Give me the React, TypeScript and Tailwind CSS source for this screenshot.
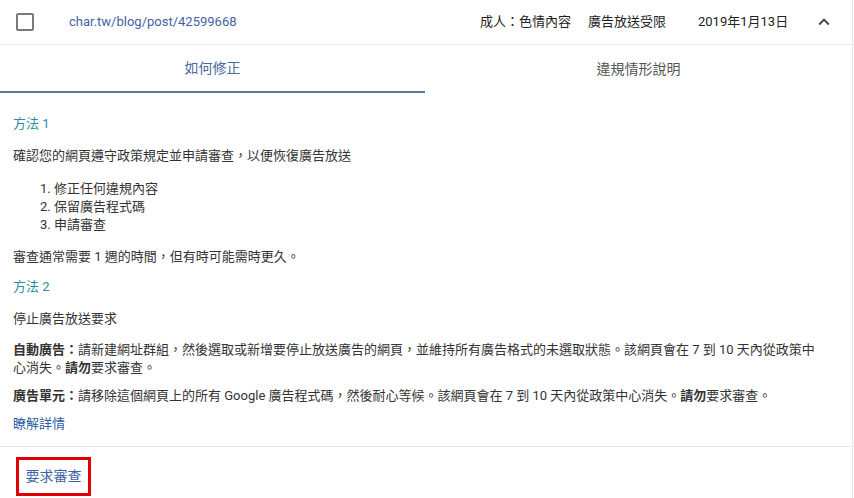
import React from "react";

const font = { fontFamily: 'Roboto, "Noto Sans CJK TC", sans-serif' };

export default function App() {
  return (
    <div
      className="w-[854px] h-[498px] bg-white text-[13px] text-[#333] overflow-hidden"
      style={font}
    >
      <div className="w-[853px] h-full border-r border-[#e6e6e6] flex flex-col">
        {/* header row */}
        <div className="h-[45px] flex items-center border-b border-[#e8e8e8] shrink-0">
          <div className="w-[18px] h-[18px] ml-4 border-2 border-[#7a7a7a] rounded-[2px]" />
          <a className="ml-[35px] text-[#3f63a8] text-[13px]">char.tw/blog/post/42599668</a>
          <div className="flex-1" />
          <span className="text-[#222] w-[108px]">成人：色情內容</span>
          <span className="text-[#222] w-[110px]">廣告放送受限</span>
          <span className="text-[#222] w-[100px]">2019年1月13日</span>
          <svg width="22" height="22" viewBox="0 0 24 24" className="mr-[17px] ml-[15px]">
            <path d="M7.41 15.41L12 10.83l4.59 4.58L18 14l-6-6-6 6z" fill="#444" />
          </svg>
        </div>
        {/* tabs */}
        <div className="flex h-[48px] shrink-0">
          <div className="w-[425px] flex items-center justify-center text-[#4a6aa0] text-[14px] border-b-2 border-[#5d7a99]">
            如何修正
          </div>
          <div className="flex-1 flex items-center justify-center text-[#555] text-[14px]">
            違規情形說明
          </div>
        </div>
        {/* content */}
        <div className="pl-[13px] pr-[34px] pt-[22px] flex flex-col leading-[18px]">
          <div className="text-[#2b8da3]">方法 1</div>
          <div className="mt-[14px]">確認您的網頁遵守政策規定並申請審查，以便恢復廣告放送</div>
          <ol className="mt-[15px] pl-[27px] flex flex-col">
            <li>1. 修正任何違規內容</li>
            <li>2. 保留廣告程式碼</li>
            <li>3. 申請審查</li>
          </ol>
          <div className="mt-[14px]">審查通常需要 1 週的時間，但有時可能需時更久。</div>
          <div className="mt-[12px] text-[#2b8da3]">方法 2</div>
          <div className="mt-[14px]">停止廣告放送要求</div>
          <div className="mt-[13px]">
            <b>自動廣告：</b>請新建網址群組，然後選取或新增要停止放送廣告的網頁，並維持所有廣告格式的未選取狀態。該網頁會在 7 到 10 天內從政策中心消失。<b>請勿</b>要求審查。
          </div>
          <div className="mt-[10px]">
            <b>廣告單元：</b>請移除這個網頁上的所有 Google 廣告程式碼，然後耐心等候。該網頁會在 7 到 10 天內從政策中心消失。<b>請勿</b>要求審查。
          </div>
          <a className="mt-[10px] text-[#2d5aa6]">瞭解詳情</a>
        </div>
        <div className="mt-[13px] border-t border-[#e8e8e8] flex items-start pl-4 pt-[10px]">
          <div className="w-[75px] h-[39px] border-[3px] border-[#e00000] flex items-center justify-center text-[#3f63a8] text-[14px]">
            要求審查
          </div>
        </div>
      </div>
    </div>
  );
}
